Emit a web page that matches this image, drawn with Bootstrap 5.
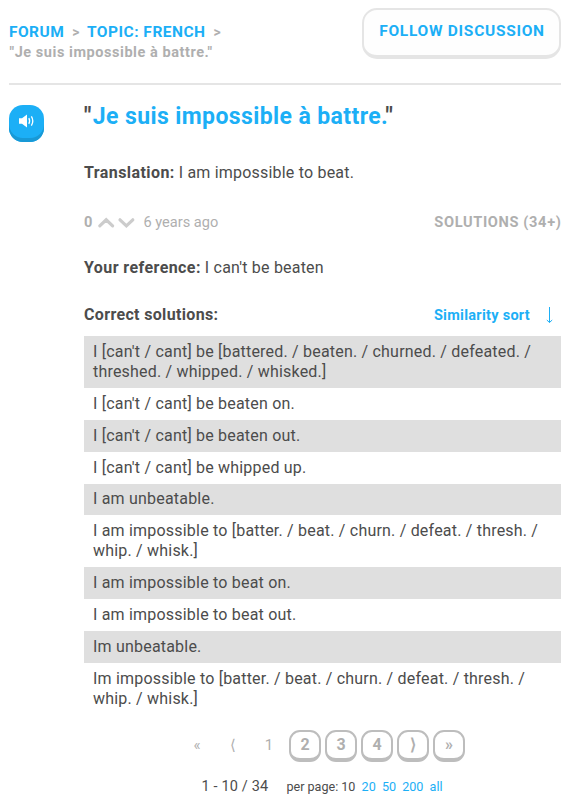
<!DOCTYPE html>
<html lang="en">
<head>
<meta charset="utf-8">
<meta name="viewport" content="width=device-width, initial-scale=1">
<title>Forum discussion</title>
<link href="https://cdn.jsdelivr.net/npm/bootstrap@5.3.0/dist/css/bootstrap.min.css" rel="stylesheet">
<style>
body{font-family:Roboto,"Open Sans",sans-serif;font-size:16px;line-height:20px;color:#4c4c4c;background:#fff;overflow:hidden}
a{color:#1caff6;text-decoration:none}
b{font-weight:700}
.page{padding:8px 9px 0}
.top-bar{height:77px;border-bottom:2px solid #e5e5e5}
.crumbs{padding-top:14px;font-weight:700;color:#afafaf;font-size:15.5px;white-space:nowrap}
.crumbs .forum{letter-spacing:.45px}
.crumbs .topic{letter-spacing:.5px}
.crumbs .sep{font-size:14px;margin:0 7.5px 0 8px}
.crumbs .thread{font-size:14.5px;letter-spacing:.55px;padding-left:.5px;margin-top:1px}
.follow{width:199px;height:51px;border:2px solid #e5e5e5;border-bottom-width:4px;border-radius:15px;background:#fefefe;color:#1caff6;font-size:15.5px;font-weight:700;letter-spacing:.72px;line-height:20px;padding:0 0 3px 1px}
.speaker{width:35px;height:37px;border:0;border-radius:14px;background:#1caff6;box-shadow:inset 0 -4px #1899d6;padding:0 0 5px;margin-top:20px}
.main-col{width:477px}
.headline{font-size:23px;line-height:28px;letter-spacing:.4px;margin:18px 0 0}
.headline a{margin-left:1px}
.tr-line{margin-top:32px}
.spaced{letter-spacing:.42px}
.plain{letter-spacing:.2px}
.meta{margin-top:29px;color:#afafaf;height:20px;font-size:14.6px}
.solutions{font-weight:700;letter-spacing:.64px;margin-right:-.5px}
.ago{margin-left:7px}
.ref-line{margin-top:26px}
.sort-line{margin-top:27px;height:20px}
.sort-line b{letter-spacing:.34px}
.sort-link{font-size:14.5px;font-weight:700;letter-spacing:.28px;padding-top:1px}
.answers{margin-top:11px}
.answers .list-group-item{border:0;border-radius:0;padding:5.95px 9px;color:#4c4c4c;background:#fff;letter-spacing:.2px;white-space:nowrap}
.answers .list-group-item:nth-child(odd){background:#dfdfdf}
.pager{gap:4px;margin:15px 0 0 97px;color:#afafaf}
.pager span,.pager a{width:32px;height:32px;font-size:15px;text-align:center;line-height:30px}
.pager a{border:2px solid #bdbdbd;border-bottom-width:4px;border-radius:11px;color:#afafaf;font-weight:700;line-height:26px;font-size:16px}
.counts{margin:15px 0 0 117.5px;white-space:nowrap}
.counts .range{font-size:14.5px;letter-spacing:.15px;width:85px}
.counts .per{font-size:12.6px;letter-spacing:-.02px}
.counts a{margin-left:6.2px}
</style>
</head>
<body>
<div class="page">
  <header class="top-bar d-flex justify-content-between">
    <nav class="crumbs">
      <div><a href="#" class="forum">FORUM</a><span class="sep">&gt;</span><a href="#" class="topic">TOPIC: FRENCH</a><span class="sep">&gt;</span></div>
      <div class="thread">"Je suis impossible à battre."</div>
    </nav>
    <button class="btn follow">FOLLOW DISCUSSION</button>
  </header>
  <main class="d-flex justify-content-between align-items-start">
    <button class="btn speaker d-flex justify-content-center align-items-center" aria-label="Listen">
      <svg width="17" height="14" viewBox="0 0 17 14"><path d="M1 4.2h3L9 .5v13L4 9.8H1z" fill="#fff"/><path d="M10.800 4.200q1.700 2.800 0 5.600M13.400 2.400q2.800 4.600 0 9.200" fill="none" stroke="#fff" stroke-width="1.3"/></svg>
    </button>
    <div class="main-col">
      <h1 class="headline fw-bold">"<a href="#">Je suis impossible à battre.</a>"</h1>
      <div class="tr-line"><b class="spaced">Translation:</b> <span class="plain">I am impossible to beat.</span></div>
      <div class="meta d-flex align-items-center">
        <b>0</b>
        <svg class="ms-1" width="40" height="14" viewBox="0 0 40 14" fill="none" stroke="#ccc" stroke-width="3.2" stroke-linecap="round"><path d="M3.8 10.8l6.4-6 6.4 6M24 4.8l6.4 6 6.4-6"/></svg>
        <span class="ago">6 years ago</span>
        <span class="solutions ms-auto">SOLUTIONS (34+)</span>
      </div>
      <div class="ref-line"><b class="spaced">Your reference:</b> <span class="plain">I can't be beaten</span></div>
      <div class="sort-line d-flex align-items-center">
        <b class="me-auto">Correct solutions:</b>
        <a href="#" class="sort-link">Similarity sort</a>
        <svg class="ms-3" width="15" height="18" viewBox="0 0 15 18" fill="none" stroke="#1caff6"><path d="M3.5 1v15.5M.8 14l2.700 2.500L6.200 14"/></svg>
      </div>
      <div class="answers list-group">
        <div class="list-group-item">I [can't / cant] be [battered. / beaten. / churned. / defeated. /<br>threshed. / whipped. / whisked.]</div>
        <div class="list-group-item">I [can't / cant] be beaten on.</div>
        <div class="list-group-item">I [can't / cant] be beaten out.</div>
        <div class="list-group-item">I [can't / cant] be whipped up.</div>
        <div class="list-group-item">I am unbeatable.</div>
        <div class="list-group-item">I am impossible to [batter. / beat. / churn. / defeat. / thresh. /<br>whip. / whisk.]</div>
        <div class="list-group-item">I am impossible to beat on.</div>
        <div class="list-group-item">I am impossible to beat out.</div>
        <div class="list-group-item">Im unbeatable.</div>
        <div class="list-group-item">Im impossible to [batter. / beat. / churn. / defeat. / thresh. /<br>whip. / whisk.]</div>
      </div>
      <nav class="pager d-flex">
        <span>«</span><span>⟨</span><span>1</span>
        <a href="#">2</a><a href="#">3</a><a href="#">4</a><a href="#">⟩</a><a href="#">»</a>
      </nav>
      <div class="counts d-flex align-items-baseline">
        <span class="range">1 - 10 / 34</span>
        <span class="per">per page: 10<a href="#">20</a><a href="#">50</a><a href="#">200</a><a href="#">all</a></span>
      </div>
    </div>
  </main>
</div>
</body>
</html>
